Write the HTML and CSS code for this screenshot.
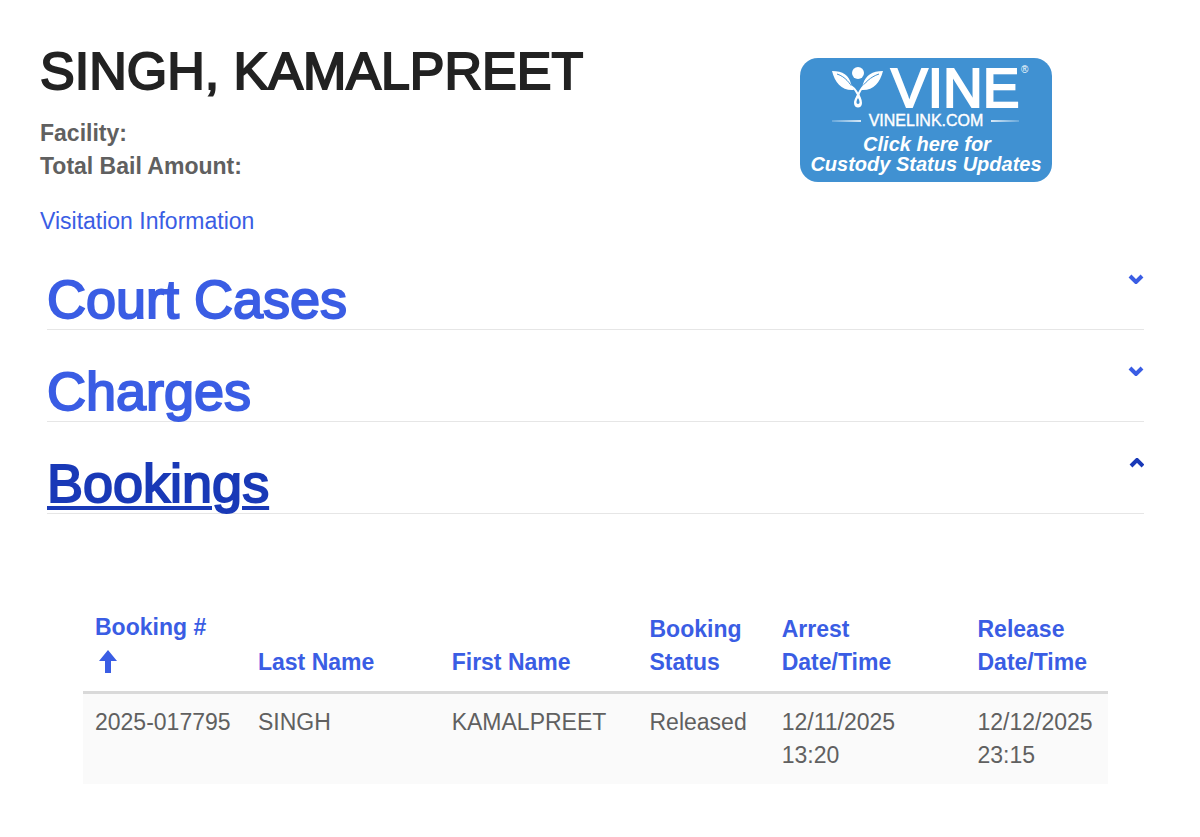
FILE: index.html
```html
<!DOCTYPE html>
<html lang="en">
<head>
<meta charset="utf-8">
<meta name="viewport" content="width=device-width, initial-scale=1">
<title>SINGH, KAMALPREET</title>
<link rel="stylesheet" href="styles.css">
</head>
<body>
<main class="page">
  <header class="summary">
    <div class="person">
      <h1 class="name">SINGH, KAMALPREET</h1>
      <p class="facts">Facility:<br>Total Bail Amount:</p>
      <a class="visit" href="#visitation">Visitation Information</a>
    </div>
    <a class="vine" href="#vine" aria-label="VINE custody status updates">
      <svg class="vine-logo" viewBox="0 0 252 124" role="img" aria-hidden="true">
        <defs>
          <linearGradient id="fade-left"><stop offset="0" stop-color="#fff" stop-opacity=".2"/><stop offset="1" stop-color="#fff" stop-opacity=".8"/></linearGradient>
          <linearGradient id="fade-right"><stop offset="0" stop-color="#fff" stop-opacity=".8"/><stop offset="1" stop-color="#fff" stop-opacity=".2"/></linearGradient>
        </defs>
        <rect width="252" height="124" rx="18" fill="#4091d2"/>
        <g fill="#fff">
          <circle cx="58" cy="15" r="6"/>
          <path d="M32 13C43 13 49 17 51 26C52 29 53 30 54 32C42 33 35 25 32 13Z"/>
          <path d="M83 13C72 13 66 17 63 26C62 29 62 30 61 32C73 33 80 25 83 13Z"/>
          <path fill-rule="evenodd" d="M58 34C57 38 54 41 54 45C54 51 62 51 62 45C62 41 60 38 58 34ZM58 40C56 43 56 46 58 46C60 46 60 43 58 40Z"/>
        </g>
        <path d="M37 16C46 19 49 25 54 31M79 16C70 19 65 25 61 30" fill="none" stroke="#4091d2" stroke-width="1"/>
        <path d="M51 28Q57 32 59 40M65 27Q60 31 57 40" fill="none" stroke="#fff" stroke-width="2"/>
        <text class="vine-word" x="91" y="49">VINE</text>
        <text class="vine-mark" x="221" y="15">®</text>
        <rect x="32" y="62" width="29" height="2" fill="url(#fade-left)"/>
        <rect x="191" y="62" width="28" height="2" fill="url(#fade-right)"/>
        <text class="vine-site" x="126" y="68">VINELINK.COM</text>
        <text class="vine-note" x="127" y="93">Click here for</text>
        <text class="vine-note" x="126" y="113">Custody Status Updates</text>
      </svg>
    </a>
  </header>

  <div class="sections">
    <h2 class="section"><button class="toggle" type="button" aria-expanded="false"><span class="label">Court Cases</span>
      <svg class="chevron" viewBox="0 0 16 10" aria-hidden="true"><path d="M2 2L8 8L14 2"/></svg></button></h2>
    <h2 class="section"><button class="toggle" type="button" aria-expanded="false"><span class="label">Charges</span>
      <svg class="chevron" viewBox="0 0 16 10" aria-hidden="true"><path d="M2 2L8 8L14 2"/></svg></button></h2>
    <h2 class="section"><button class="toggle open" type="button" aria-expanded="true" aria-controls="bookings"><span class="label">Bookings</span>
      <svg class="chevron" viewBox="0 0 16 10" aria-hidden="true"><path d="M3 8L9 2L15 8"/></svg></button></h2>
    <div class="panel" id="bookings">
      <table class="bookings">
        <colgroup><col class="c-number"><col class="c-last"><col class="c-first"><col class="c-status"><col class="c-arrest"><col class="c-release"></colgroup>
        <thead>
          <tr>
            <th scope="col" aria-sort="ascending"><a href="#number">Booking #<br><svg class="arrow" viewBox="0 0 18 23" aria-hidden="true"><path d="M9 0L18 11H12V23H6V11H0Z"/></svg></a></th>
            <th scope="col"><a href="#last">Last Name</a></th>
            <th scope="col"><a href="#first">First Name</a></th>
            <th scope="col"><a href="#status">Booking Status</a></th>
            <th scope="col"><a href="#arrest">Arrest<br>Date/Time</a></th>
            <th scope="col"><a href="#release">Release<br>Date/Time</a></th>
          </tr>
        </thead>
        <tbody>
          <tr>
            <td>2025-017795</td>
            <td>SINGH</td>
            <td>KAMALPREET</td>
            <td>Released</td>
            <td>12/11/2025<br>13:20</td>
            <td>12/12/2025<br>23:15</td>
          </tr>
        </tbody>
      </table>
    </div>
  </div>
</main>
</body>
</html>
```
FILE: styles.css
```css
* { box-sizing: border-box; }

body {
  margin: 0;
  background: #fff;
  color: #606060;
  font: 23px/33px "Liberation Sans", Arial, sans-serif;
}

a { color: #3a5de4; text-decoration: none; }
a:hover { text-decoration: underline; }

.page { padding: 39px 40px 52px; }

.summary {
  display: grid;
  grid-template-columns: 19fr 9fr;
  align-items: start;
}

.name {
  margin: 0;
  color: #222;
  font-size: 52px;
  font-weight: 400;
  line-height: 64px;
  -webkit-text-stroke: 2px #222;
}

.facts { margin: 14px 0 22px; font-weight: 700; }
.visit { display: block; width: fit-content; }

.vine { display: block; width: 70%; margin-top: 19px; }
.vine-logo {
  display: block;
  width: 100%;
  overflow: visible;
  fill: #fff;
  font-family: "Liberation Sans", Arial, sans-serif;
}
.vine-word { font-size: 55px; stroke: #fff; stroke-width: 2px; }
.vine-mark { font-size: 10px; }
.vine-site { font-size: 16px; text-anchor: middle; stroke: #fff; stroke-width: 0.4px; }
.vine-note { font-size: 20px; font-weight: 700; font-style: italic; text-anchor: middle; }

.sections { padding: 0 16px 0 7px; }

.section {
  margin: 0;
  font-size: 54px;
  font-weight: 400;
  line-height: 60px;
}

.toggle {
  display: flex;
  justify-content: space-between;
  align-items: flex-start;
  width: 100%;
  padding: 31px 0 0;
  border: 0;
  border-bottom: 1px solid #e6e6e6;
  background: none;
  color: #3a5de4;
  font: inherit;
  text-align: left;
  cursor: pointer;
  -webkit-text-stroke: 2px currentColor;
}
.toggle.open { color: #1939b7; }
.toggle.open .label {
  text-decoration: underline;
  text-decoration-thickness: 4px;
  text-underline-offset: 4px;
}

.chevron {
  width: 16px;
  height: 10px;
  margin-top: 5px;
  fill: none;
  stroke: currentColor;
  stroke-width: 4;
}

.panel { padding: 85px 36px 0; }

.bookings {
  width: 100%;
  border-collapse: collapse;
  table-layout: fixed;
}
.c-number { width: 15.9%; }
.c-last { width: 18.9%; }
.c-first { width: 19.3%; }
.c-status { width: 12.9%; }
.c-arrest { width: 19.1%; }
.c-release { width: 13.9%; }

th, td { padding: 12px 0 12px 12px; text-align: left; }
th { vertical-align: bottom; border-bottom: 3px solid #d9d9d9; }
td { vertical-align: top; background: #fafafa; }

.arrow {
  width: 18px;
  height: 23px;
  margin: 0 0 6px 4px;
  fill: currentColor;
  vertical-align: -11px;
}
```
